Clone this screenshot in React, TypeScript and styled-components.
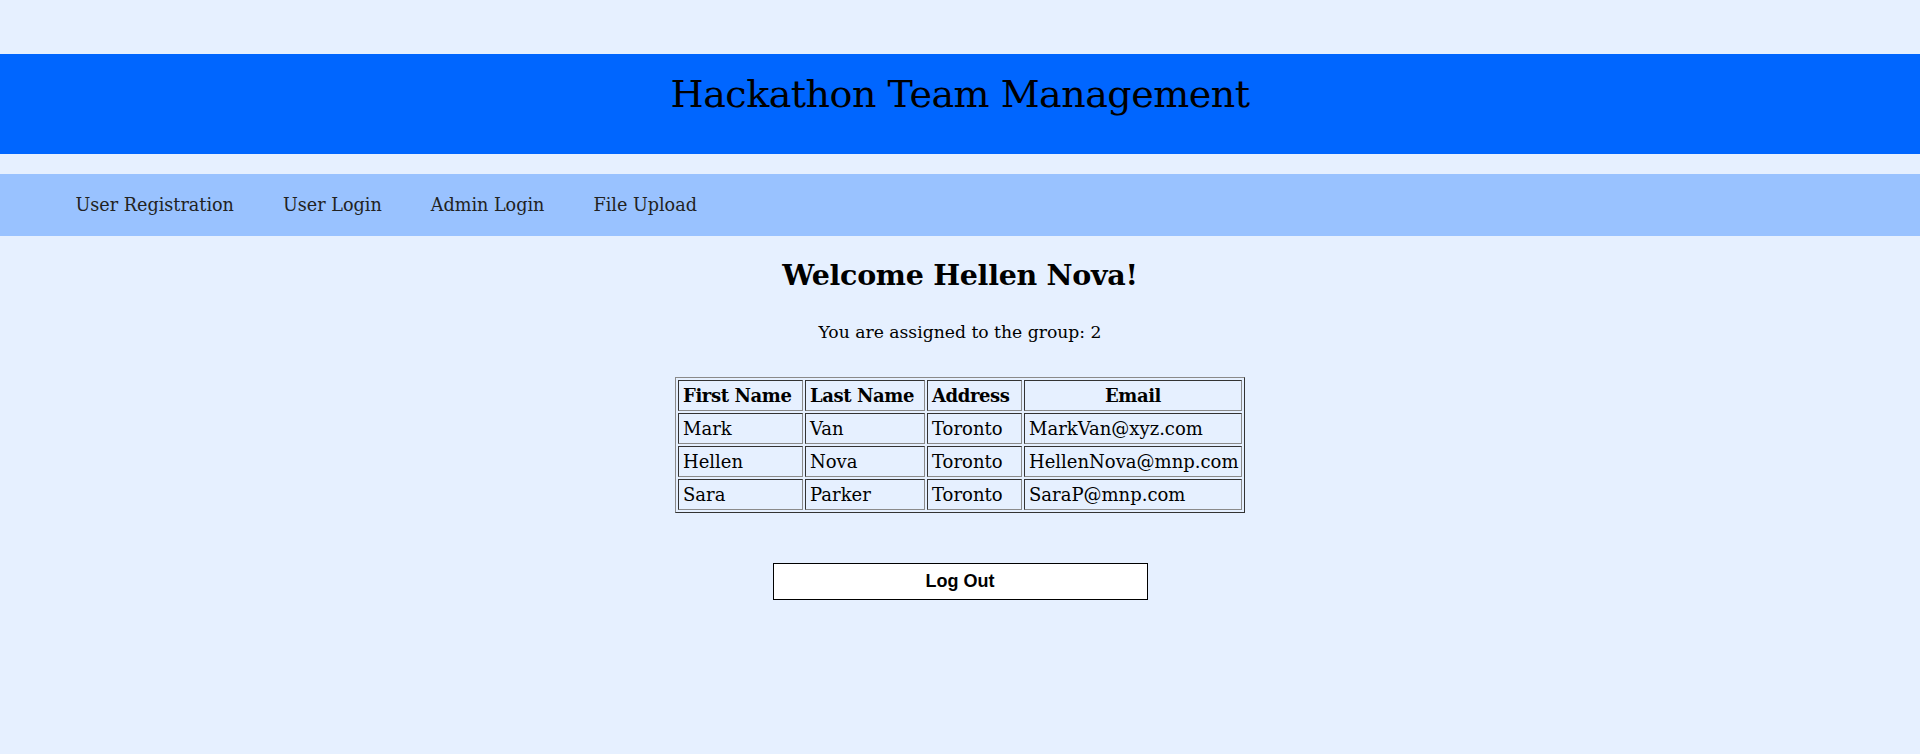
import React from "react";
import styled, { createGlobalStyle } from "styled-components";

const GlobalStyle = createGlobalStyle`
  html, body {
    margin: 0;
    padding: 0;
    background: #e6f0ff;
  }
  body {
    font-family: "DejaVu Serif", Georgia, serif;
    color: #000;
  }
`;

const Page = styled.div`
  min-height: 754px;
  padding-top: 54px;
  box-sizing: border-box;
`;

const Header = styled.header`
  height: 100px;
  background: #0066ff;
  display: flex;
  justify-content: center;
  box-sizing: border-box;
  padding-top: 18px;
`;

const Title = styled.h1`
  margin: 0;
  font-weight: normal;
  font-size: 38px;
  line-height: 44px;
  color: #000;
  letter-spacing: -0.5px;
`;

const Nav = styled.nav`
  margin-top: 20px;
  height: 62px;
  background: #99c2ff;
  display: flex;
  align-items: center;
  padding-left: 51px;
  box-sizing: border-box;
`;

const NavLink = styled.a`
  font-size: 17.6px;
  color: #222;
  text-decoration: none;
  padding: 0 24.5px;
  cursor: pointer;
`;

const Main = styled.main`
  display: flex;
  flex-direction: column;
  align-items: center;
`;

const Welcome = styled.h2`
  margin: 22px 0 0;
  font-size: 28.5px;
  font-weight: bold;
  line-height: 34px;
  letter-spacing: -0.3px;
`;

const Group = styled.p`
  margin: 29px 0 0;
  font-size: 17.2px;
  line-height: 22px;
`;

const Table = styled.table`
  margin-top: 34px;
  border-collapse: separate;
  border-spacing: 2px;
  border-style: solid;
  border-width: 1px;
  border-color: #8a8a8a #333 #333 #8a8a8a;
  table-layout: fixed;
  width: 570px;
`;

const Th = styled.th<{ $w: number; $align?: string }>`
  width: ${(p) => p.$w}px;
  box-sizing: border-box;
  border-style: solid;
  border-width: 1px;
  border-color: #333 #8a8a8a #8a8a8a #333;
  padding: 3px 4px;
  font-size: 18px;
  font-weight: bold;
  text-align: ${(p) => p.$align || "left"};
  white-space: nowrap;
  height: 31px;
  letter-spacing: -0.4px;
`;

const Td = styled.td`
  box-sizing: border-box;
  border-style: solid;
  border-width: 1px;
  border-color: #333 #8a8a8a #8a8a8a #333;
  padding: 3px 4px;
  font-size: 18px;
  white-space: nowrap;
  height: 31px;
`;

const LogOut = styled.button`
  margin-top: 50px;
  width: 375px;
  height: 37px;
  background: #fff;
  border: 1px solid #000;
  font-family: "Liberation Sans", Arial, sans-serif;
  font-weight: bold;
  font-size: 18px;
  color: #000;
  cursor: pointer;
`;

const rows = [
  ["Mark", "Van", "Toronto", "MarkVan@xyz.com"],
  ["Hellen", "Nova", "Toronto", "HellenNova@mnp.com"],
  ["Sara", "Parker", "Toronto", "SaraP@mnp.com"],
];

export default function App() {
  return (
    <>
      <GlobalStyle />
      <Page>
        <Header>
          <Title>Hackathon Team Management</Title>
        </Header>
        <Nav>
          <NavLink>User Registration</NavLink>
          <NavLink>User Login</NavLink>
          <NavLink>Admin Login</NavLink>
          <NavLink>File Upload</NavLink>
        </Nav>
        <Main>
          <Welcome>Welcome Hellen Nova!</Welcome>
          <Group>You are assigned to the group: 2</Group>
          <Table>
            <thead>
              <tr>
                <Th $w={125}>First Name</Th>
                <Th $w={120}>Last Name</Th>
                <Th $w={95}>Address</Th>
                <Th $w={218} $align="center">Email</Th>
              </tr>
            </thead>
            <tbody>
              {rows.map((r) => (
                <tr key={r[3]}>
                  {r.map((c) => (
                    <Td key={c}>{c}</Td>
                  ))}
                </tr>
              ))}
            </tbody>
          </Table>
          <LogOut>Log Out</LogOut>
        </Main>
      </Page>
    </>
  );
}
